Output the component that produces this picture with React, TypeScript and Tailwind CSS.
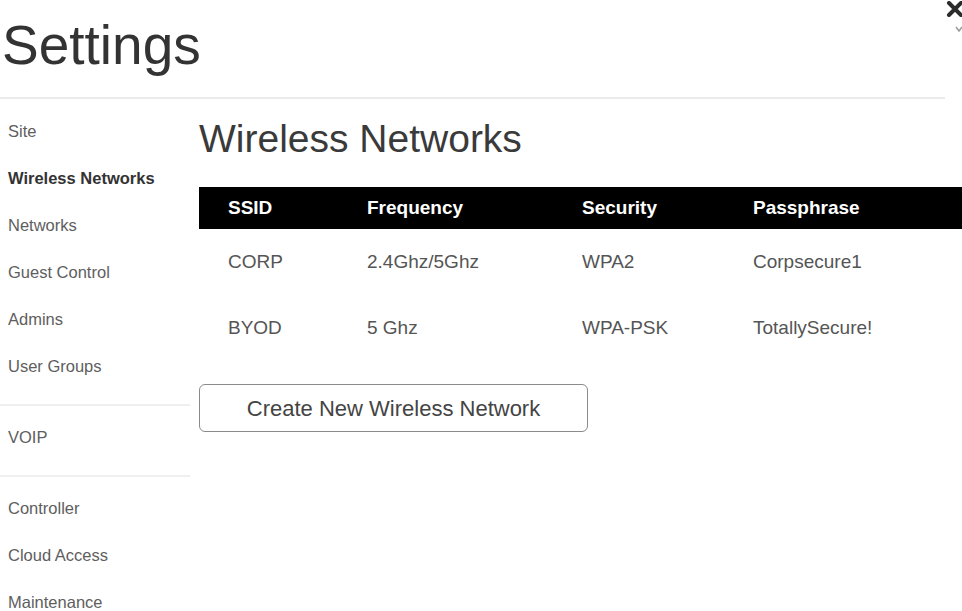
import { Fragment } from "react";

const sideGroups: { label: string; active?: boolean }[][] = [
    [
        { label: "Site" },
        { label: "Wireless Networks", active: true },
        { label: "Networks" },
        { label: "Guest Control" },
        { label: "Admins" },
        { label: "User Groups" },
    ],
    [{ label: "VOIP" }],
    [{ label: "Controller" }, { label: "Cloud Access" }, { label: "Maintenance" }],
];

const rows = [
    { ssid: "CORP", freq: "2.4Ghz/5Ghz", security: "WPA2", pass: "Corpsecure1" },
    { ssid: "BYOD", freq: "5 Ghz", security: "WPA-PSK", pass: "TotallySecure!" },
];

const cols = "grid grid-cols-[139px_215px_171px_1fr] pl-[29px]";

export default function App() {
    return (
        <div className="relative w-[962px] h-[611px] overflow-hidden bg-white font-['Liberation_Sans',Arial,sans-serif]">
            {/* close button, clipped by the window edge */}
            <svg className="absolute left-[946px] top-[1px]" width="20" height="16" viewBox="0 0 20 16">
                <path d="M3 2 L15 14 M15 2 L3 14" stroke="#2b2b2b" strokeWidth="4" strokeLinecap="round" />
            </svg>
            <svg className="absolute left-[955px] top-[25px]" width="8" height="8" viewBox="0 0 8 8">
                <path d="M1 2 L4 6 L7 2" stroke="#9a9a9a" strokeWidth="1.5" fill="none" />
            </svg>

            <div className="w-[945px] border-b-2 border-[#ebebeb] pt-[18px] pb-[25px] pl-[2px]">
                <h1 className="text-[55px] leading-[54px] text-[#333]">Settings</h1>
            </div>

            <div className="flex">
                <nav className="w-[190px] shrink-0 pt-[9px]">
                    {sideGroups.map((group, gi) => (
                        <Fragment key={gi}>
                            {gi > 0 && <div className="mt-[14px] mb-[8px] h-[2px] bg-[#efefef]" />}
                            {group.map((item) => (
                                <div
                                    key={item.label}
                                    className={
                                        "h-[47px] flex items-center pl-2 text-[16.5px] " +
                                        (item.active ? "font-bold text-[#333]" : "text-[#5e5e5e]")
                                    }
                                >
                                    {item.label}
                                </div>
                            ))}
                        </Fragment>
                    ))}
                </nav>

                <main className="flex-1 pl-[9px] pt-5">
                    <h2 className="text-[39px] leading-none text-[#3a3a3a]">Wireless Networks</h2>

                    <div className="mt-[29px]">
                        <div className={cols + " h-[42px] items-center bg-black text-[19px] font-bold text-white"}>
                            <span>SSID</span>
                            <span>Frequency</span>
                            <span>Security</span>
                            <span>Passphrase</span>
                        </div>
                        {rows.map((r) => (
                            <div key={r.ssid} className={cols + " h-[66px] items-center text-[19px] text-[#555]"}>
                                <span>{r.ssid}</span>
                                <span>{r.freq}</span>
                                <span>{r.security}</span>
                                <span>{r.pass}</span>
                            </div>
                        ))}
                    </div>

                    <button className="mt-[23px] w-[389px] h-[48px] rounded-md border-[1.5px] border-[#8a8a8a] bg-white text-[22px] text-[#444]">
                        Create New Wireless Network
                    </button>
                </main>
            </div>
        </div>
    );
}
